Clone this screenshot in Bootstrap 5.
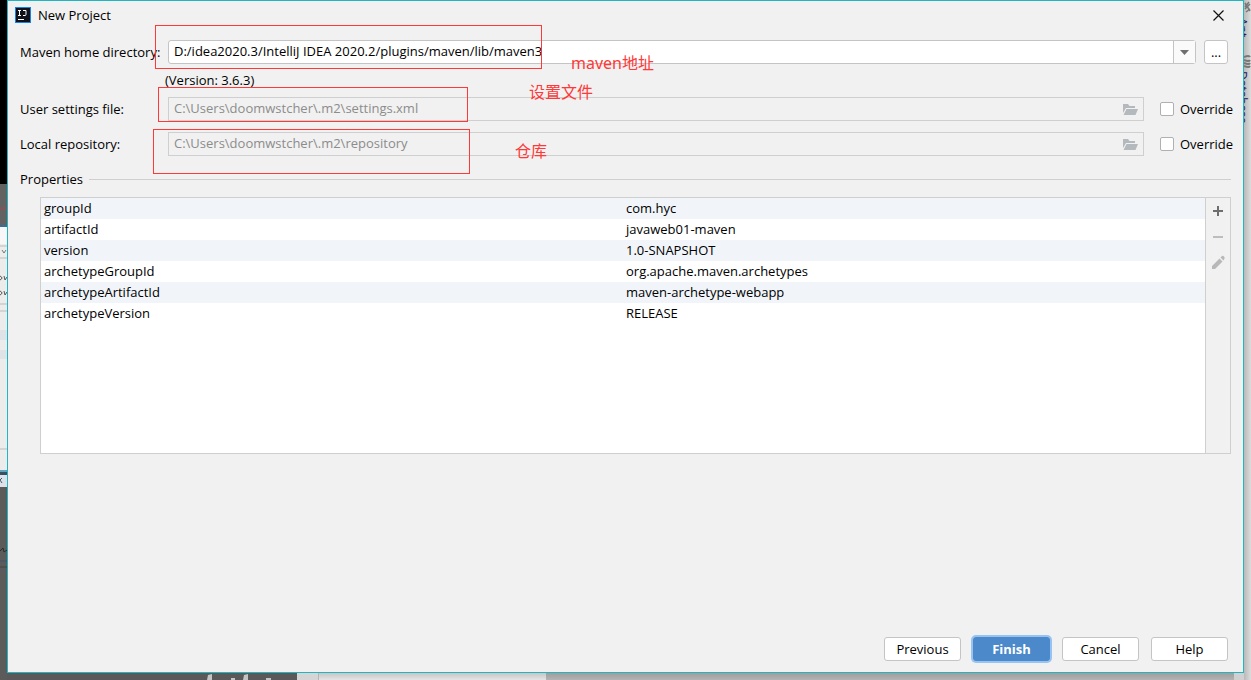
<!DOCTYPE html>
<html lang="en">
<head>
<meta charset="utf-8">
<meta name="viewport" content="width=device-width, initial-scale=1">
<title>New Project</title>
<link rel="stylesheet" href="https://cdn.jsdelivr.net/npm/bootstrap@5.3.0/dist/css/bootstrap.min.css">
<style>
  :root { --line: #cfcfcf; --ctl: #c4c4c4; --note: #ff3838; }
  body {
    font-family: "Open Sans", "Noto Sans CJK SC", sans-serif;
    font-size: 13px; line-height: 20px; color: #000;
    background: #d6d6d6;
  }
  .desktop { display: grid; grid-template-columns: 7px minmax(0, 1fr) 7px; grid-template-rows: minmax(0, 1fr) 7px; height: 100vh; overflow: hidden; }
  .strip-left { grid-row: 1 / 3; background: #5b5b5b; }
  .strip-right { grid-row: 1 / 3; grid-column: 3; background: linear-gradient(90deg, #b9b9b9, #dcdcdc); }
  .strip-left, .strip-right { overflow: hidden; }
  .strip-bottom { grid-column: 2; grid-row: 2; }
  .strip-bottom .dark { width: 290px; background: #5a5858; }
  .strip-bottom .gutter { width: 22px; background: #d5d5d5; border-right: 1px solid #b5b5b5; }
  .strip-bottom .pale { width: 227px; background: linear-gradient(#c6c6c6, #e4e4e4); }
  .strip-bottom .grey { background: linear-gradient(#9e9e9e, #b3b3b3); }
  .strip-bottom .end { width: 10px; background: #d0d0d0; }

  .dialog-win { grid-column: 2; grid-row: 1; background: #f1f1f1; border: 1px solid #1fb6c1; }
  .titlebar { padding: 0 19px 0 7px; height: 28px; }
  .titlebar .brand { gap: 7px; }
  .titlebar h1 { font-size: 13px; line-height: 20px; font-weight: 400; }
  .icon-btn { border: 0; background: none; padding: 0; line-height: 0; }
  .form-area { padding: 11px 12px 0; }
  .field-label { width: 148px; flex: none; white-space: nowrap; }
  .ctl {
    height: 24px; width: 100%; border: 1px solid var(--ctl); border-radius: 3px;
    background: #fff; font-size: 13px; line-height: 20px; padding: 0 5px 2px; color: #000;
  }
  .ctl:disabled { background: #f1f1f1; border-color: var(--line); border-radius: 0; color: #8c8c8c; opacity: 1; }
  select.ctl { appearance: none; }
  .combo-arrow { position: absolute; right: 1px; top: 1px; bottom: 1px; width: 22px; border-left: 1px solid var(--ctl); background: #fafafa; pointer-events: none; }
  .folder { position: absolute; right: 6px; top: 6px; }
  .browse { width: 24px; height: 24px; border: 1px solid var(--ctl); border-radius: 3px; background: #fff; padding: 0; line-height: 20px; margin-right: 3px; }
  .override { width: 87px; padding-left: 16px; gap: 6px; flex: none; }
  .override .form-check-input { width: 14px; height: 14px; margin: 0; border: 1px solid #b0b0b0; border-radius: 2px; flex: none; }
  .version { height: 33px; padding: 6px 0 0 145px; }
  .row-gap { margin-top: 11px; }

  .note-box { position: absolute; border: 1px solid var(--note); pointer-events: none; z-index: 2; }
  .note-text { position: absolute; color: var(--note); font-family: "Noto Sans", "Noto Sans CJK SC", sans-serif; font-size: 16px; line-height: 24px; white-space: nowrap; pointer-events: none; z-index: 2; }
  .box-home { left: -13px; top: -15px; width: 387px; height: 44px; }
  .box-settings { left: -10px; top: -10px; width: 310px; height: 35px; }
  .box-repo { left: -15px; top: -3px; width: 317px; height: 45px; }
  .text-home { left: 403px; top: 11px; }
  .text-settings { left: 361px; top: -17px; }
  .text-repo { left: 347px; top: 7px; }

  .section-head { margin-top: 13px; gap: 6px; }
  .section-head h2 { font-size: 13px; line-height: 20px; font-weight: 400; }
  .section-head .rule { height: 1px; background: var(--line); }
  .props { margin: 8px 0 0 20px; height: 257px; border: 1px solid var(--line); background: #fff; }
  .props table { width: 100%; table-layout: fixed; }
  .props td { height: 21px; padding: 0 3px; line-height: 21px; }
  .props tr:nth-child(odd) { background: #f1f5fa; }
  .tools { width: 25px; background: #f1f1f1; border-left: 1px solid var(--line); padding-top: 5px; gap: 10px; flex: none; }
  .actions { padding: 0 15px 11px; gap: 12px; }
  .dlg-btn { width: 77px; height: 24px; padding: 0; font-size: 13px; line-height: 22px; border: 1px solid var(--ctl); border-radius: 3px; background: #fff; color: #000; }
  .dlg-btn.main-action { background: #4b89ca; border-color: #4b89ca; color: #fff; font-weight: 700; box-shadow: 0 0 0 2px #97c3f3; }
  .side-tabs { writing-mode: vertical-rl; font-size: 12px; line-height: 14px; color: #151560; }
  .side-tabs span { position: relative; left: -9px; }
</style>
</head>
<body>
<div class="desktop">
  <div class="strip-left" aria-hidden="true">
    <svg width="7" height="680" class="d-block">
      <rect width="7" height="184" fill="#000"/>
      <rect y="184" width="7" height="42" fill="#626262"/>
      <path d="M0 210l2-3 2 3M5 206v4" stroke="#a14a4a" fill="none"/>
      <rect y="225" width="7" height="2" fill="#386f98"/>
      <rect y="227" width="7" height="246" fill="#ececec"/>
      <rect y="227" width="7" height="17" fill="#f7f7f7"/>
      <path d="M0 246h7M0 258h7M0 304h7M0 311h7M0 449h7" stroke="#bbb"/>
      <path d="M2 250l2 3 2-3" stroke="#777" fill="none"/>
      <path d="M0 276q4 2 0 4M4 276l1 4 2-3M0 291q4 2 0 4M4 291l1 4 2-3" stroke="#555" fill="none"/>
      <path d="M0 330h7v10H0zM0 350h7v9H0z" fill="#dfe3e8"/>
      <rect y="470" width="7" height="2" fill="#63a2be"/>
      <rect y="472" width="7" height="3" fill="#3d4e60"/>
      <rect y="475" width="7" height="12" fill="#dde1ea"/>
      <path d="M0 480l2-2M0 480l2 3" stroke="#456"/>
      <rect y="487" width="7" height="193" fill="#5b5b5b"/>
      <path d="M0 551l3-3 1 4 3-2" stroke="#2b2b2b" fill="none"/>
      <path d="M0 561h7" stroke="#405268"/>
      <path d="M0 567h7" stroke="#444"/>
    </svg>
  </div>

  <main class="dialog-win d-flex flex-column">
    <header class="titlebar d-flex align-items-center justify-content-between">
      <div class="brand d-flex align-items-center">
        <svg width="16" height="16" viewBox="0 0 16 16" aria-hidden="true">
          <rect x=".5" y=".5" width="15" height="15" fill="#10131c" stroke="#1783e8"/>
          <path d="M3 3.500h3M4.500 3.500v5M3 8.500h3M8 3.500h3v4q0 1-1 1H8" fill="none" stroke="#fff"/>
          <path d="M3 12.500h6" stroke="#fff"/>
        </svg>
        <h1 class="m-0">New Project</h1>
      </div>
      <button type="button" class="icon-btn" aria-label="Close">
        <svg width="11" height="11" viewBox="0 0 11 11"><path d="M.5.5l10 10M10.500.5l-10 10" stroke="#111" stroke-width="1.200"/></svg>
      </button>
    </header>

    <form class="form-area">
      <div class="d-flex align-items-center">
        <label class="field-label" for="home">Maven home directory:</label>
        <div class="position-relative flex-grow-1 me-2">
          <select class="ctl d-block" id="home"><option>D:/idea2020.3/IntelliJ IDEA 2020.2/plugins/maven/lib/maven3</option></select>
          <span class="combo-arrow d-flex align-items-center justify-content-center">
            <svg width="9" height="5" viewBox="0 0 9 5" aria-hidden="true"><path d="M0 0h9L4.500 5z" fill="#6e6e6e"/></svg>
          </span>
          <span class="note-box box-home"></span>
          <span class="note-text text-home">maven地址</span>
        </div>
        <button type="button" class="browse">...</button>
      </div>
      <div class="version">(Version: 3.6.3)</div>

      <div class="d-flex align-items-center">
        <label class="field-label" for="settings">User settings file:</label>
        <div class="position-relative flex-grow-1">
          <input class="ctl d-block" id="settings" type="text" value="C:\Users\doomwstcher\.m2\settings.xml" disabled>
          <svg class="folder" width="16" height="13" viewBox="0 0 16 13" aria-hidden="true"><path d="M1 1h5l1.500 2H13v2H4L1 10zM4.500 6H16l-2.500 6H1.500z" fill="#b3b9bd"/></svg>
          <span class="note-box box-settings"></span>
          <span class="note-text text-settings">设置文件</span>
        </div>
        <div class="override d-flex align-items-center">
          <input class="form-check-input" type="checkbox" id="ov1"><label for="ov1">Override</label>
        </div>
      </div>

      <div class="d-flex align-items-center row-gap">
        <label class="field-label" for="repo">Local repository:</label>
        <div class="position-relative flex-grow-1">
          <input class="ctl d-block" id="repo" type="text" value="C:\Users\doomwstcher\.m2\repository" disabled>
          <svg class="folder" width="16" height="13" viewBox="0 0 16 13" aria-hidden="true"><path d="M1 1h5l1.500 2H13v2H4L1 10zM4.500 6H16l-2.500 6H1.500z" fill="#b3b9bd"/></svg>
          <span class="note-box box-repo"></span>
          <span class="note-text text-repo">仓库</span>
        </div>
        <div class="override d-flex align-items-center">
          <input class="form-check-input" type="checkbox" id="ov2"><label for="ov2">Override</label>
        </div>
      </div>

      <div class="section-head d-flex align-items-center">
        <h2 class="m-0">Properties</h2><span class="rule flex-grow-1"></span>
      </div>
      <div class="props d-flex">
        <div class="flex-grow-1">
          <table>
            <tbody>
              <tr><td>groupId</td><td>com.hyc</td></tr>
              <tr><td>artifactId</td><td>javaweb01-maven</td></tr>
              <tr><td>version</td><td>1.0-SNAPSHOT</td></tr>
              <tr><td>archetypeGroupId</td><td>org.apache.maven.archetypes</td></tr>
              <tr><td>archetypeArtifactId</td><td>maven-archetype-webapp</td></tr>
              <tr><td>archetypeVersion</td><td>RELEASE</td></tr>
            </tbody>
          </table>
        </div>
        <div class="tools d-flex flex-column align-items-center">
          <button type="button" class="icon-btn" aria-label="Add"><svg width="16" height="16" viewBox="0 0 16 16"><path d="M3 8h10M8 3v10" stroke="#6e6e6e" stroke-width="2"/></svg></button>
          <button type="button" class="icon-btn" aria-label="Remove" disabled><svg width="16" height="16" viewBox="0 0 16 16"><path d="M3 8h10" stroke="#bdbdbd" stroke-width="2"/></svg></button>
          <button type="button" class="icon-btn" aria-label="Edit" disabled><svg width="16" height="16" viewBox="0 0 16 16"><path d="M2 11l7.500-7.500 3 3L5 14H2zM10.500 2.500L12 1q1-.5 2 .5t.5 2L13.500 5.500z" fill="#b8b8b8"/></svg></button>
        </div>
      </div>
    </form>

    <footer class="actions d-flex justify-content-end mt-auto">
      <button type="button" class="dlg-btn">Previous</button>
      <button type="button" class="dlg-btn main-action">Finish</button>
      <button type="button" class="dlg-btn">Cancel</button>
      <button type="button" class="dlg-btn">Help</button>
    </footer>
  </main>

  <div class="strip-right" aria-hidden="true">
    <svg width="7" height="18" class="d-block"><path d="M1 3l5 8M5 2L1 7M2 12l4-3M1 9l5-5" stroke="#777" stroke-width="1.500"/></svg>
    <div class="side-tabs"><span>Ant</span></div>
    <svg width="7" height="34" class="d-block"><path d="M0 20q5-2 6 0M0 23q5 2 6 0M0 26q5 2 6 0M0 29q5 2 6 0" stroke="#777" stroke-width="2" fill="none"/></svg>
    <div class="side-tabs"><span>Database</span></div>
  </div>
  <div class="strip-bottom d-flex" aria-hidden="true">
    <div class="dark"><svg width="290" height="7" class="d-block"><path d="M200 7l1-5 4-1v6zM224 7V5h4v2zM236 7l1-5 4-1v6zM259 7V5h5v2z" fill="#c4c4c4"/></svg></div>
    <div class="gutter"></div>
    <div class="pale"></div>
    <div class="grey flex-grow-1"></div>
    <div class="end"></div>
  </div>
</div>
<script src="https://cdn.jsdelivr.net/npm/bootstrap@5.3.0/dist/js/bootstrap.bundle.min.js"></script>
</body>
</html>
